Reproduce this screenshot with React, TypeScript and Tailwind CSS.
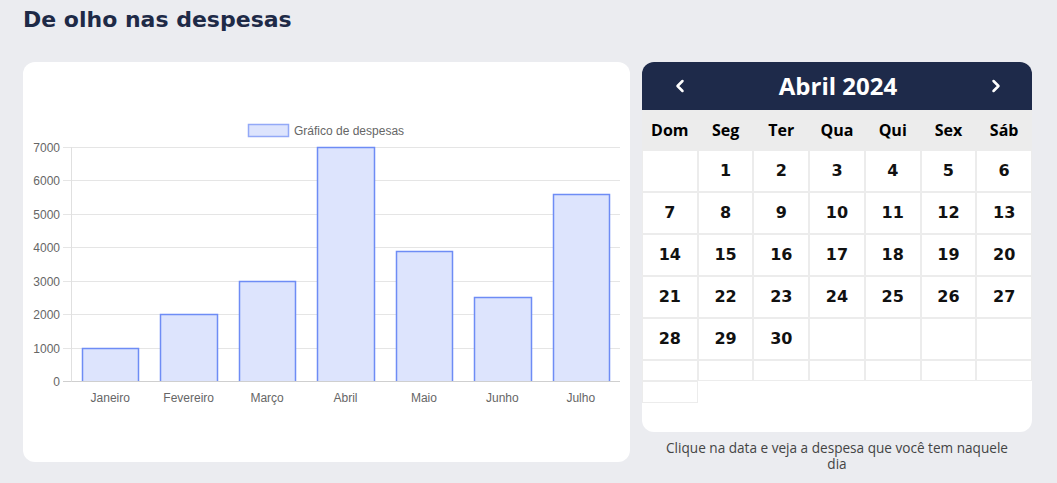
import { ChevronLeft, ChevronRight } from "lucide-react";

const months = [
  { label: "Janeiro", value: 1000 },
  { label: "Fevereiro", value: 2000 },
  { label: "Março", value: 3000 },
  { label: "Abril", value: 7000 },
  { label: "Maio", value: 3900 },
  { label: "Junho", value: 2500 },
  { label: "Julho", value: 5600 },
];

const weekDays = ["Dom", "Seg", "Ter", "Qua", "Qui", "Sex", "Sáb"];

// chart geometry, in card coordinates
const left = 48;
const right = 597;
const zeroY = 319;
const perUnit = 234 / 7000;
const slot = (right - left) / months.length;
const barW = slot * 0.72;

function ExpenseChart() {
  return (
    <svg width="607" height="400" viewBox="0 0 607 400" className="block">
      <g style={{ fontFamily: '"Liberation Sans", Arial, sans-serif' }}>
        <rect x="225.5" y="62.5" width="40" height="12" fill="#dde4fd" stroke="#93a9f7" strokeWidth="1.5" />
        <text x="271" y="72.5" fontSize="12" fill="#666">
          Gráfico de despesas
        </text>

        {[0, 1000, 2000, 3000, 4000, 5000, 6000, 7000].map((v) => {
          const y = Math.round(zeroY - v * perUnit) + 0.5;
          return (
            <g key={v}>
              <line x1="40" x2={right} y1={y} y2={y} stroke={v === 0 ? "#cfcfcf" : "#e5e5e5"} />
              <text x="37" y={y + 4} fontSize="12" fill="#666" textAnchor="end">
                {v}
              </text>
            </g>
          );
        })}
        <line x1={left + 0.5} x2={left + 0.5} y1="85" y2={zeroY + 0.5} stroke="#e0e0e0" />

        {months.map((m, i) => {
          const cx = left + slot * (i + 0.5);
          const x0 = Math.round(cx - barW / 2) + 0.5;
          const x1 = Math.round(cx + barW / 2) + 0.5;
          const top = Math.round(zeroY - m.value * perUnit) + 0.5;
          return (
            <g key={m.label}>
              <rect x={x0} y={top} width={x1 - x0} height={zeroY - top} fill="#dde4fd" />
              <path
                d={`M${x0} ${zeroY} V${top} H${x1} V${zeroY}`}
                fill="none"
                stroke="#6e8cf5"
                strokeWidth="1.5"
              />
              <text x={cx} y="340" fontSize="12" fill="#666" textAnchor="middle">
                {m.label}
              </text>
            </g>
          );
        })}
      </g>
    </svg>
  );
}

function Calendar() {
  const days: (number | null)[] = [null];
  for (let d = 1; d <= 30; d++) days.push(d);
  while (days.length < 35) days.push(null);

  return (
    <div className="w-[390px]">
      <div className="bg-white rounded-xl overflow-hidden h-[370px]">
        <div className="h-[48px] bg-[#1e2a4a] flex items-center justify-between pl-[28px] pr-[26px] text-white">
          <ChevronLeft size={20} strokeWidth={3} />
          <span className="text-[24px] font-bold font-['Open_Sans',sans-serif]">
            Abril 2024
          </span>
          <ChevronRight size={20} strokeWidth={3} />
        </div>
        <div className="h-[40px] bg-[#ececec] grid grid-cols-7 items-center">
          {weekDays.map((w) => (
            <span
              key={w}
              className="text-center text-[16px] font-bold text-black font-['Open_Sans',sans-serif]"
            >
              {w}
            </span>
          ))}
        </div>
        <div className="grid grid-cols-7">
          {days.map((d, i) => (
            <div
              key={i}
              className="h-[42px] border border-[#ececec] flex items-center justify-center text-[16px] font-bold text-[#111] font-['DejaVu_Sans',sans-serif]"
            >
              {d}
            </div>
          ))}
          {Array.from({ length: 7 }).map((_, i) => (
            <div key={"e" + i} className="h-[21px] border border-[#ececec]" />
          ))}
          <div className="h-[22px] border border-[#ececec]" />
        </div>
      </div>
      <p className="mt-[8px] px-[17px] text-center text-[13.6px] leading-[16px] text-[#444] font-['Open_Sans',sans-serif]">
        Clique na data e veja a despesa que você tem naquele dia
      </p>
    </div>
  );
}

export default function App() {
  return (
    <div className="min-h-screen bg-[#ebecf0] px-[23px] pt-[5px]">
      <h1 className="text-[22px] leading-[30px] font-bold text-[#1e2a47] font-['DejaVu_Sans',sans-serif]">
        De olho nas despesas
      </h1>
      <div className="mt-[27px] flex items-start gap-[12px]">
        <div className="bg-white rounded-xl w-[607px] h-[400px]">
          <ExpenseChart />
        </div>
        <Calendar />
      </div>
    </div>
  );
}
